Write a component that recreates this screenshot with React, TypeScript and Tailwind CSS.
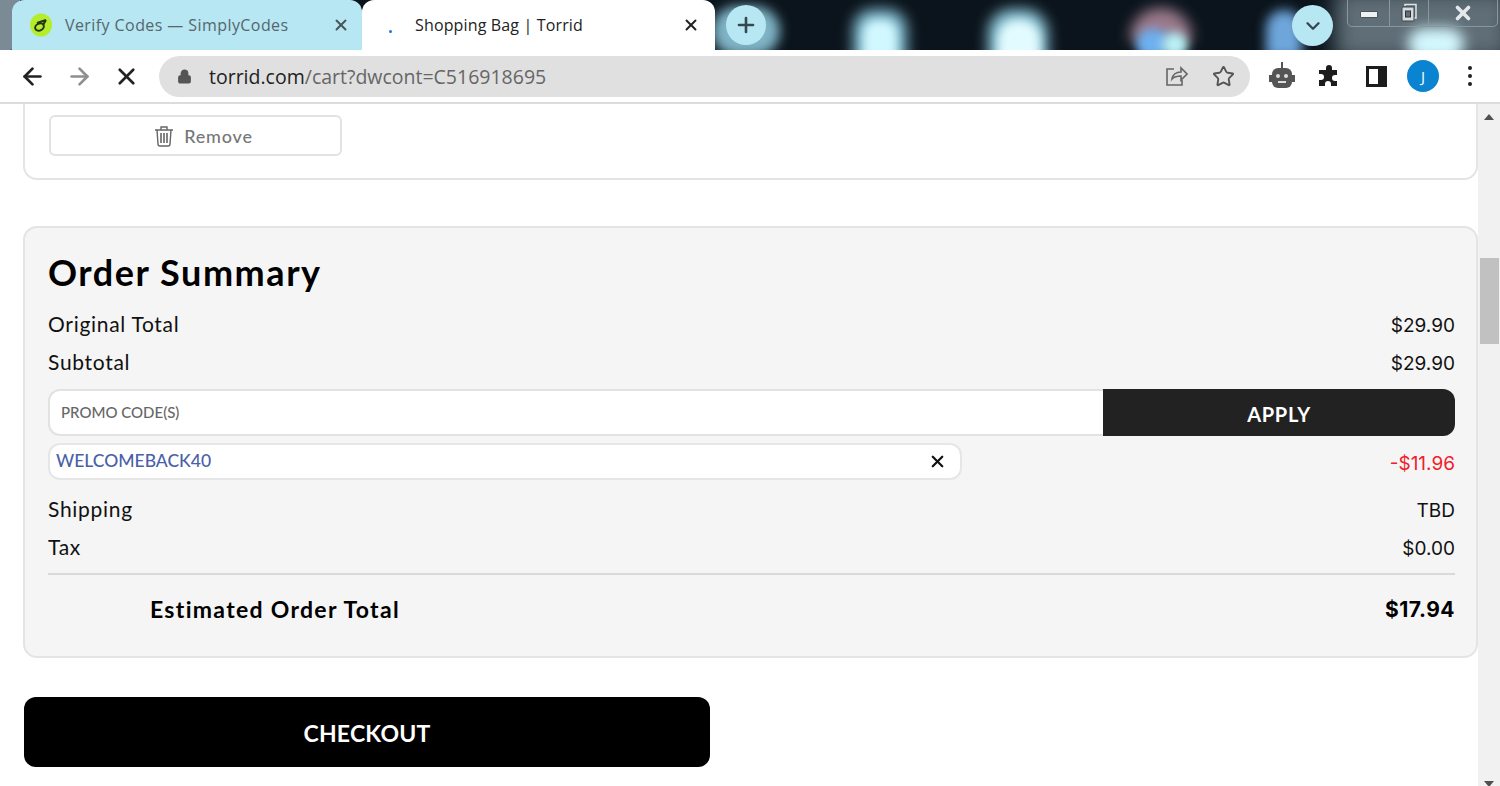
import React from "react";
import { ArrowLeft, ArrowRight, ChevronDown, Lock, Plus, Star, X } from "lucide-react";

const rowText = "text-[21px] leading-[38px] tracking-[0.7px] text-[#111]";

function Row({ label, value }: { label: string; value: string }) {
  return (
    <div className={`flex h-[38px] justify-between ${rowText}`}>
      <span>{label}</span>
      <span className="font-['Inter',sans-serif] text-[19px] leading-[41px] tracking-normal">{value}</span>
    </div>
  );
}

function TabStrip() {
  return (
    <div className="relative flex h-[50px] overflow-hidden bg-[#0b141c] pl-[12px]">
      {/* blurred wallpaper behind the tabs */}
      <div className="absolute left-0 top-0 h-[50px] w-[20px] rounded-br-[10px] bg-[#7b8b95]" />
      <div className="absolute left-[712px] top-[6px] h-[50px] w-[68px] rounded-full bg-[#7fb4c6] blur-[6px]" />
      <div className="absolute left-[853px] top-[9px] h-[56px] w-[54px] rounded-t-[20px] bg-[#7fb8cc] blur-[7px]" />
      <div className="absolute left-[863px] top-[20px] h-[40px] w-[34px] rounded-t-[14px] bg-[#d2f8ff] blur-[5px]" />
      <div className="absolute left-[988px] top-[9px] h-[56px] w-[60px] rounded-t-[24px] bg-[#8ac2d4] blur-[7px]" />
      <div className="absolute left-[998px] top-[20px] h-[40px] w-[42px] rounded-t-[20px] bg-[#e2fbff] blur-[5px]" />
      <div className="absolute left-[1130px] top-[8px] h-[34px] w-[62px] rounded-t-[30px] bg-[#9c7b8d] blur-[7px]" />
      <div className="absolute left-[1136px] top-[29px] h-[30px] w-[34px] rounded-full bg-[#6fb0f0] blur-[5px]" />
      <div className="absolute left-[1162px] top-[32px] h-[26px] w-[26px] rounded-full bg-[#b9f0f5] blur-[5px]" />
      <div className="absolute left-[1266px] top-[10px] h-[48px] w-[36px] rounded-t-[18px] bg-[#6ea6dc] blur-[6px]" />
      <div className="absolute left-[1335px] top-[-10px] h-[70px] w-[175px] bg-[#5f6e77] blur-[10px]" />
      <div className="absolute left-[1408px] top-[28px] h-[32px] w-[56px] rounded-full bg-[#d4f8ff] blur-[7px]" />

      <div className="relative flex w-[350px] items-center rounded-t-[12px] bg-[#b6e7f3] pl-[18px] pr-[12px]">
        <svg width="24" height="24" viewBox="0 0 24 24" className="mr-[11px] shrink-0">
          <ellipse cx="11" cy="12" rx="11" ry="11.5" fill="#b4ee2a" />
          <ellipse cx="9.5" cy="14" rx="4.5" ry="3.5" fill="none" stroke="#26331a" strokeWidth="2" transform="rotate(-25 9.5 14)" />
          <path d="M7 10c3-1 6-2 9-3M13 12l3-5" fill="none" stroke="#26331a" strokeWidth="2" />
        </svg>
        <span className="flex-1 font-['Open_Sans',sans-serif] text-[16px] tracking-[0.42px] text-[#55666c]">Verify Codes — SimplyCodes</span>
        <X size={18} strokeWidth={2.6} className="text-[#4a5558]" />
      </div>
      <div className="relative flex w-[353px] items-center rounded-t-[12px] bg-white pl-[27px] pr-[15px]">
        <span className="mb-[-12px] mr-[23px] h-[3px] w-[3px] rounded-full bg-[#1a73e8]" />
        <span className="flex-1 font-['Open_Sans',sans-serif] text-[16px] tracking-[0.15px] text-[#222]">Shopping Bag | Torrid</span>
        <X size={18} strokeWidth={2.6} className="text-[#222]" />
      </div>
      <div className="relative ml-[11px] mt-[5px] flex h-[40px] w-[40px] items-center justify-center rounded-full bg-[#b6e7f3]">
        <Plus size={24} strokeWidth={2.6} className="text-[#37474f]" />
      </div>

      <div className="absolute left-[1292px] top-[5px] flex h-[41px] w-[41px] items-center justify-center rounded-full bg-[#b6e7f3]">
        <ChevronDown size={22} strokeWidth={2.6} className="text-[#37474f]" />
      </div>
      <div className="absolute left-[1347px] top-[-2px] flex h-[29px] w-[151px] rounded-b-[5px] border border-[#8b979e] text-[#e8ecee]">
        <div className="flex w-[42px] items-center justify-center border-r border-[#8b979e]">
          <span className="mt-[3px] h-[7px] w-[18px] rounded-[1px] border border-[#4a5358] bg-[#eef1f2]" />
        </div>
        <div className="flex w-[39px] items-center justify-center border-r border-[#8b979e]">
          <svg width="20" height="20" viewBox="0 0 20 20" fill="none">
            <path d="M6 3V1.500h11V15h-2" stroke="#dfe4e6" strokeWidth="1.500" />
            <rect x="3" y="4" width="12" height="14" rx="1" fill="#d5dadd" stroke="#3e474c" />
            <rect x="6.500" y="8" width="5" height="6" fill="#5f6e77" stroke="#2c3338" />
          </svg>
        </div>
        <div className="flex flex-1 items-center justify-center">
          <X size={22} strokeWidth={4} className="text-[#e4e8ea]" />
        </div>
      </div>
    </div>
  );
}

function Toolbar() {
  return (
    <div className="flex h-[54px] items-center border-b-2 border-[#dcdcdc] bg-white">
      <ArrowLeft size={27} strokeWidth={2.4} className="ml-[19px] text-[#222]" />
      <ArrowRight size={27} strokeWidth={2.4} className="ml-[20px] text-[#8f8f8f]" />
      <X size={27} strokeWidth={2.4} className="ml-[20px] text-[#222]" />
      <div className="ml-[19px] flex h-[41px] w-[1091px] items-center rounded-full bg-[#e0e0e0] pl-[18px] pr-[15px]">
        <Lock size={15} fill="#555" strokeWidth={2.4} className="text-[#555]" />
        <span className="ml-[17px] flex-1 pt-[1px] font-['Open_Sans',sans-serif] text-[19.5px] text-[#666]">
          <span className="text-[#222]">torrid.com</span>/cart?dwcont=C516918695
        </span>
        <svg width="24" height="24" viewBox="0 0 24 24" fill="none" stroke="#666" strokeWidth="1.6">
          <path d="M10 5H3v16h15v-5" />
          <path d="M8 15c1-5 5-7 9-7V4l6 6-6 6v-4c-4 0-7 1-9 3z" />
        </svg>
        <Star size={23} strokeWidth={2} className="ml-[24px] text-[#555]" />
      </div>
      <svg width="26" height="30" viewBox="0 0 26 30" className="ml-[19px]">
        <path d="M13 1v6" stroke="#555" strokeWidth="2" />
        <rect x="3" y="7" width="20" height="20" rx="6" fill="#555" />
        <rect x="0" y="14" width="3" height="7" fill="#555" />
        <rect x="23" y="14" width="3" height="7" fill="#555" />
        <circle cx="9" cy="15" r="2" fill="#ddd" />
        <circle cx="17" cy="15" r="2" fill="#ddd" />
        <path d="M9 21h8" stroke="#ddd" strokeWidth="2" />
      </svg>
      <svg width="24" height="24" viewBox="0 0 24 24" className="ml-[22px]">
        <path d="M9 4a3 3 0 0 1 6 0v2h5v5h-2a3 3 0 0 0 0 6h2v5h-6v-2a3 3 0 0 0-6 0v2H2v-6h2a3 3 0 0 0 0-6H2V6h7z" fill="#1c1c1c" />
      </svg>
      <div className="ml-[25px] h-[21px] w-[21px] border-[3px] border-r-[9px] border-[#1c1c1c]" />
      <div className="ml-[20px] flex h-[32px] w-[32px] items-center justify-center rounded-full bg-[#0a84d0] font-['Open_Sans',sans-serif] text-[15px] text-white">J</div>
      <div className="ml-[29px] flex flex-col gap-[4px]">
        <span className="h-[4px] w-[4px] rounded-full bg-[#222]" />
        <span className="h-[4px] w-[4px] rounded-full bg-[#222]" />
        <span className="h-[4px] w-[4px] rounded-full bg-[#222]" />
      </div>
    </div>
  );
}

function OrderSummary() {
  return (
    <section className="mt-[46px] h-[432px] rounded-[14px] border-2 border-[#e4e4e4] bg-[#f5f5f5] pl-[23px] pr-[21px] pt-[22px]">
      <h2 className="text-[36px] font-bold leading-[44px] tracking-[1.55px] text-black">Order Summary</h2>
      <div className="mt-[11px]">
        <Row label="Original Total" value="$29.90" />
        <Row label="Subtotal" value="$29.90" />
      </div>
      <div className="mt-[8px] flex h-[47px]">
        <div className="flex flex-1 items-center rounded-l-[12px] border-2 border-r-0 border-[#e2e2e2] bg-white pl-[11px] text-[15px] font-medium text-[#666]">
          PROMO CODE(S)
        </div>
        <button className="w-[352px] rounded-r-[12px] bg-[#222] pt-[3px] text-[20px] font-bold tracking-[0.7px] text-white">APPLY</button>
      </div>
      <div className="mt-[7px] flex items-center justify-between">
        <div className="flex h-[37px] w-[914px] items-center justify-between rounded-[12px] border-2 border-[#e6e6e6] bg-white pl-[6px] pr-[13px]">
          <span className="text-[17.5px] font-medium text-[#4a5fa8]">WELCOMEBACK40</span>
          <X size={19} strokeWidth={2.8} className="text-[#111]" />
        </div>
        <span className="mt-[5px] font-['Inter',sans-serif] text-[19px] text-[#f0212b]">-$11.96</span>
      </div>
      <div className="mt-[10px] border-b-2 border-[#d9d9d9] pb-[7px]">
        <Row label="Shipping" value="TBD" />
        <Row label="Tax" value="$0.00" />
      </div>
      <div className="mt-[14px] flex justify-between pl-[102px] text-[23px] font-bold leading-[40px] tracking-[1.3px] text-black">
        <span>Estimated Order Total</span>
        <span className="font-['Inter',sans-serif] text-[21px] leading-[42px] tracking-[0.5px]">$17.94</span>
      </div>
    </section>
  );
}

export default function App() {
  return (
    <div className="h-[786px] w-[1500px] overflow-hidden bg-white font-['Lato',sans-serif]">
      <TabStrip />
      <Toolbar />
      <div className="flex h-[682px]">
        <main className="w-[1478px] pl-[23px]">
          <div className="h-[76px] rounded-b-[14px] border-2 border-t-0 border-[#e4e4e4] pl-[24px] pt-[11px]">
            <button className="flex h-[41px] w-[293px] items-center justify-center rounded-[6px] border-2 border-[#e2e2e2] pt-[1px] text-[18px] font-medium tracking-[0.8px] text-[#777]">
              <svg width="20" height="22" viewBox="0 0 20 22" fill="none" stroke="#666" strokeWidth="1.4" className="ml-[16px] mr-[10px]">
                <path d="M1 5h18M7 4.500V2h6v2.500" />
                <path d="M3 5l1 14c0 1.500 1 2 2 2h8c1 0 2-.5 2-2l1-14" />
                <path d="M7 8v10M10 8v10M13 8v10" strokeWidth="1.600" />
              </svg>
              Remove
            </button>
          </div>
          <OrderSummary />
          <button className="ml-[1px] mt-[39px] h-[70px] w-[686px] rounded-[12px] bg-black pt-[2px] text-[23px] font-bold tracking-[0.2px] text-white">CHECKOUT</button>
        </main>
        <aside className="relative w-[22px] bg-[#f1f1f1]">
          <span className="absolute left-[6px] top-[10px] h-0 w-0 border-x-[5px] border-b-[6px] border-x-transparent border-b-[#505050]" />
          <div className="absolute left-[2px] top-[154px] h-[86px] w-[19px] bg-[#c1c1c1]" />
          <span className="absolute bottom-[-1px] left-[6px] h-0 w-0 border-x-[5px] border-t-[6px] border-x-transparent border-t-[#505050]" />
        </aside>
      </div>
    </div>
  );
}
